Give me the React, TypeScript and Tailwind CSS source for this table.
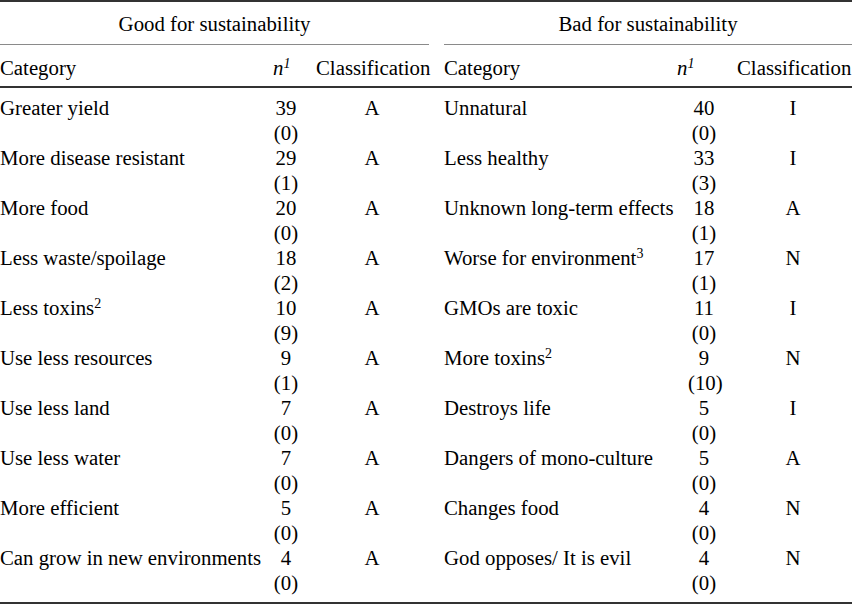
type Row = { cat: React.ReactNode; n: number; sub: number; cls: string };

const good: Row[] = [
  { cat: 'Greater yield', n: 39, sub: 0, cls: 'A' },
  { cat: 'More disease resistant', n: 29, sub: 1, cls: 'A' },
  { cat: 'More food', n: 20, sub: 0, cls: 'A' },
  { cat: 'Less waste/spoilage', n: 18, sub: 2, cls: 'A' },
  { cat: <>Less toxins<sup className="text-[14px]">2</sup></>, n: 10, sub: 9, cls: 'A' },
  { cat: 'Use less resources', n: 9, sub: 1, cls: 'A' },
  { cat: 'Use less land', n: 7, sub: 0, cls: 'A' },
  { cat: 'Use less water', n: 7, sub: 0, cls: 'A' },
  { cat: 'More efficient', n: 5, sub: 0, cls: 'A' },
  { cat: 'Can grow in new environments', n: 4, sub: 0, cls: 'A' },
];

const bad: Row[] = [
  { cat: 'Unnatural', n: 40, sub: 0, cls: 'I' },
  { cat: 'Less healthy', n: 33, sub: 3, cls: 'I' },
  { cat: 'Unknown long-term effects', n: 18, sub: 1, cls: 'A' },
  { cat: <>Worse for environment<sup className="text-[14px]">3</sup></>, n: 17, sub: 1, cls: 'N' },
  { cat: 'GMOs are toxic', n: 11, sub: 0, cls: 'I' },
  { cat: <>More toxins<sup className="text-[14px]">2</sup></>, n: 9, sub: 10, cls: 'N' },
  { cat: 'Destroys life', n: 5, sub: 0, cls: 'I' },
  { cat: 'Dangers of mono-culture', n: 5, sub: 0, cls: 'A' },
  { cat: 'Changes food', n: 4, sub: 0, cls: 'N' },
  { cat: 'God opposes/ It is evil', n: 4, sub: 0, cls: 'N' },
];

function N1() {
  return (
    <span className="italic">
      n<sup className="text-[14px] italic">1</sup>
    </span>
  );
}

export default function App() {
  return (
    <div className="w-[852px] h-[605px] overflow-hidden bg-white text-black font-['Liberation_Serif',serif] text-[20.8px] leading-[25px]">
      <div className="border-t-2 border-b-2 border-[#333]">
        {/* group headings */}
        <div className="flex pt-[9px]">
          <div className="w-[429px] pb-[8px] text-center border-b border-[#8a8a8a]">Good for sustainability</div>
          <div className="ml-[15px] flex-1 pb-[8px] text-center border-b border-[#8a8a8a]">Bad for sustainability</div>
        </div>

        {/* column headings */}
        <div className="flex pt-[10px] pb-[6px] border-b-2 border-[#333] whitespace-nowrap">
          <div className="w-[273px]">Category</div>
          <div className="w-[43px]"><N1 /></div>
          <div className="w-[128px]">Classification</div>
          <div className="w-[233px]">Category</div>
          <div className="w-[60px]"><N1 /></div>
          <div>Classification</div>
        </div>

        {/* body */}
        <div className="pt-[7px] pb-[7px]">
          {good.map((g, i) => {
            const b = bad[i];
            return (
              <div key={i} className="flex h-[50px] whitespace-nowrap">
                <div className="w-[270px]">{g.cat}</div>
                <div className="w-[32px] text-center">
                  <div>{g.n}</div>
                  <div>({g.sub})</div>
                </div>
                <div className="w-[140px] text-center">{g.cls}</div>
                <div className="ml-[2px] w-[244px]">{b.cat}</div>
                <div className="w-[32px] text-center">
                  <div>{b.n}</div>
                  <div>({b.sub})</div>
                </div>
                <div className="w-[132px] pl-[14px] text-center">{b.cls}</div>
              </div>
            );
          })}
        </div>
      </div>
    </div>
  );
}
